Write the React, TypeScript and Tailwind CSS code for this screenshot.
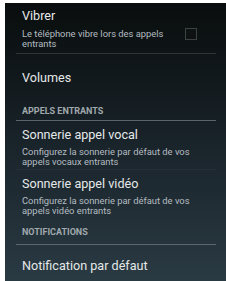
import React from 'react';

function Title({ children }: { children: React.ReactNode }) {
  return <p className="text-[12.6px] leading-[16px] text-[#e4e8e8]">{children}</p>;
}

function Sub({ children }: { children: React.ReactNode }) {
  return <p className="text-[9.4px] leading-[10px] text-[#b4bcc0]">{children}</p>;
}

function Header({ label, h }: { label: string; h: string }) {
  return (
    <div className={`flex items-center pl-[17px] ${h}`}>
      <span className="text-[9px] font-bold leading-[12px] text-[#a0a9ad]">{label}</span>
    </div>
  );
}

export default function App() {
  return (
    <div className="w-[226px] h-[281px] bg-white pl-[5px] pt-[3px] overflow-hidden" style={{ fontFamily: 'Roboto, "Noto Sans", sans-serif' }}>
      <div className="h-full w-full overflow-hidden bg-gradient-to-b from-[#090d0d] via-[#19232a] to-[#2a3a43]">
        {/* Vibrer */}
        <div className="h-[50px] pl-[17px] pr-[29px] pt-[5px] flex justify-between">
          <div>
            <Title>Vibrer</Title>
            <div className="mt-[5px]">
              <Sub>Le téléphone vibre lors des appels</Sub>
              <Sub>entrants</Sub>
            </div>
          </div>
          <div className="mt-[20px] w-[12px] h-[12px] border border-[#3a4242] bg-[#0e1212]" />
        </div>
        <div className="ml-[11px] mr-[10px] h-px bg-[#2c3434]" />

        {/* Volumes */}
        <div className="h-[47px] flex items-center pl-[17px]">
          <Title>Volumes</Title>
        </div>

        <Header label="APPELS ENTRANTS" h="h-[19px]" />
        <div className="ml-[11px] mr-[10px] h-px bg-[#5a646a]" />

        {/* Sonnerie appel vocal */}
        <div className="h-[48px] pl-[17px] pt-[6px]">
          <Title>Sonnerie appel vocal</Title>
          <div className="mt-[4px]">
            <Sub>Configurez la sonnerie par défaut de vos</Sub>
            <Sub>appels vocaux entrants</Sub>
          </div>
        </div>
        <div className="ml-[11px] mr-[10px] h-px bg-[#243036]" />

        {/* Sonnerie appel vidéo */}
        <div className="h-[50px] pl-[17px] pt-[6px]">
          <Title>Sonnerie appel vidéo</Title>
          <div className="mt-[4px]">
            <Sub>Configurez la sonnerie par défaut de vos</Sub>
            <Sub>appels vidéo entrants</Sub>
          </div>
        </div>

        <Header label="NOTIFICATIONS" h="h-[24px]" />
        <div className="ml-[11px] mr-[10px] h-px bg-[#5a666c]" />

        {/* Notification par défaut */}
        <div className="h-[42px] flex items-center pl-[17px]">
          <Title>Notification par défaut</Title>
        </div>
      </div>
    </div>
  );
}
